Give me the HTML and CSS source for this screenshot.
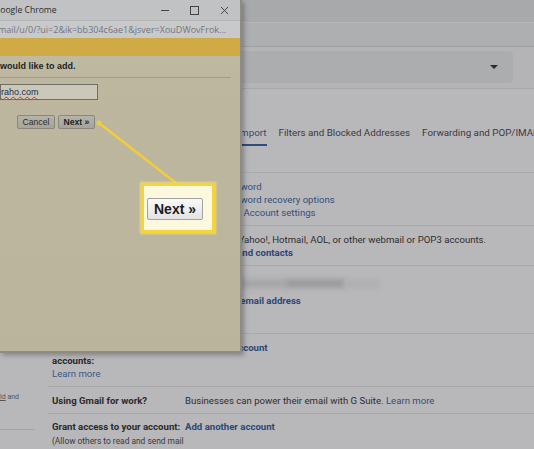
FILE: index.html
```html
<!DOCTYPE html>
<html>
<head>
<meta charset="utf-8">
<link rel="stylesheet" href="styles.css">
</head>
<body>
<div class="gmail">
  <div class="topbar"></div>
  <div class="subbar"></div>
  <div class="searchrow">
    <div class="search"><span class="caret"></span></div>
  </div>
  <div class="page">
    <aside class="side">
      <div class="side-text"><span class="side-link">ld</span> and</div>
      <div class="side-line"></div>
    </aside>
    <main class="main">
      <nav class="tabs">
        <span class="tab">General</span>
        <span class="tab">Labels</span>
        <span class="tab">Inbox</span>
        <span class="tab active">Accounts and Import</span>
        <span class="tab">Filters and Blocked Addresses</span>
        <span class="tab">Forwarding and POP/IMAP</span>
        <span class="tab">Add-ons</span>
      </nav>
      <section class="row r1">
        <div class="label">Change account settings:</div>
        <div class="content">
          <div class="link">Change password</div>
          <div class="link">Change password recovery options</div>
          <div class="link">Other Google Account settings</div>
        </div>
      </section>
      <section class="row r2">
        <div class="label">Import mail and contacts:</div>
        <div class="content">
          <div>Import from Yahoo!, Hotmail, AOL, or other webmail or POP3 accounts.</div>
          <div class="link strong">Import mail and contacts</div>
        </div>
      </section>
      <section class="row r3">
        <div class="label">Send mail as:</div>
        <div class="content">
          <div class="blur-line"><span class="blur a"></span><span class="blur b"></span><span class="blur c"></span></div>
          <div class="link strong">Add another email address</div>
        </div>
      </section>
      <section class="row r4">
        <div class="label"><b>Check mail from other accounts:</b><div class="link">Learn more</div></div>
        <div class="content">
          <div class="link strong">Add a mail account</div>
        </div>
      </section>
      <section class="row r5">
        <div class="label"><b>Using Gmail for work?</b></div>
        <div class="content">Businesses can power their email with G Suite. <span class="link">Learn more</span></div>
      </section>
      <section class="row r6">
        <div class="label"><b>Grant access to your account:</b><div class="note">(Allow others to read and send mail on your behalf)</div></div>
        <div class="content">
          <div class="link strong">Add another account</div>
        </div>
      </section>
    </main>
  </div>
</div>

<div class="popup">
  <div class="titlebar">
    <span class="title">Google Chrome</span>
    <div class="controls">
      <span class="ctl min"></span>
      <span class="ctl max"></span>
      <svg class="ctl close" viewBox="0 0 10 10" width="9" height="9"><path d="M1 1L9 9M9 1L1 9" stroke="#3a3a3a" stroke-width="1"/></svg>
    </div>
  </div>
  <div class="urlbar"><span class="url">mail/u/0/?ui=2&amp;ik=bb304c6ae1&amp;jsver=XouDWovFrok...</span></div>
  <div class="banner"></div>
  <div class="pbody">
    <div class="prompt">would like to add.</div>
    <div class="field"><span class="typed">raho.com</span></div>
    <div class="buttons">
      <span class="btn cancel">Cancel</span>
      <span class="btn next">Next »</span>
    </div>
  </div>
</div>

<svg class="pointer" width="534" height="449" viewBox="0 0 534 449">
  <line x1="99" y1="123" x2="176" y2="183" stroke="#f2cd3a" stroke-width="2.5" stroke-linecap="round"/>
  <circle cx="99" cy="123" r="2.5" fill="#f2cd3a"/>
</svg>

<div class="callout">
  <span class="big-btn">Next »</span>
</div>
</body>
</html>
```
FILE: styles.css
```css
* { box-sizing: border-box; }
html, body { margin: 0; padding: 0; }
body {
  width: 534px;
  height: 449px;
  overflow: hidden;
  position: relative;
  background: #b8b7b9;
  font-family: Roboto, "Liberation Sans", sans-serif;
  color: #2e2e30;
}

/* Gmail background (dimmed) */
.topbar { height: 22px; background: #a8a9ab; }
.subbar { height: 25px; background: #aeafb1; border-top: 1px solid #b6b6b8; border-bottom: 1px solid #9fa0a2; }
.searchrow { height: 42px; background: #b4b4b6; border-bottom: 1px solid #a7a7a9; padding: 4px 21px 0 170px; }
.search {
  height: 32px; background: #acadaf; border-radius: 4px;
  display: flex; align-items: center; justify-content: flex-end; padding-right: 15px;
}
.caret { width: 0; height: 0; border-left: 4px solid transparent; border-right: 4px solid transparent; border-top: 4px solid #2a2a2a; }

.page { display: grid; grid-template-columns: 48px 1fr; }
.side { padding-top: 304px; font-size: 7px; line-height: 8px; color: #555; }
.side-text { white-space: nowrap; }
.side-link { text-decoration: underline; }
.side-line { margin-top: 28px; width: 35px; border-top: 1px solid #a4a4a6; }

.main { font-size: 9.6px; line-height: 13px; min-width: 0; }
.tabs {
  display: flex; gap: 12px; padding: 38px 0 26px 5px;
  border-bottom: 1px solid #aaaaac; white-space: nowrap; overflow: hidden;
}
.tab { flex-shrink: 0; line-height: 12px; padding-bottom: 5px; border-bottom: 2px solid transparent; color: #3a3a3c; font-size: 9.8px; }
.tab.active { color: #2f4d7e; border-bottom-color: #2f4d7e; }

.row {
  display: grid; grid-template-columns: 133px 1fr;
  padding: 7px 0 6px 4px; border-bottom: 1px solid #aaaaac;
}
.label { padding-right: 3px; }
.label b { font-weight: 700; color: #2a2a2c; }
.note { width: 140px; font-size: 8.4px; color: #3a3a3c; }
.content { white-space: nowrap; }
.link { color: #34507e; }
.strong { font-weight: 700; color: #2c4878; }
.r1 { padding: 7px 0 6px 4px; }
.r2 { padding: 7px 0 6px 4px; }
.r3 { padding: 11px 0 26px 4px; }
.r3 .link { margin-top: 4px; }
.r4 { padding: 7px 0 6px 4px; }
.r5 { padding: 7px 0 6px 4px; }
.r6 { padding: 6px 0 0 4px; border-bottom: 0; line-height: 14px; }
.r4 .label .link { color: #3d5a8c; }

.blur-line { height: 13px; display: flex; align-items: center; gap: 0; }
.blur { display: inline-block; height: 9px; filter: blur(2.5px); }
.blur.a { width: 100px; background: #a6a6a8; }
.blur.b { width: 60px; background: #9c9c9e; }
.blur.c { width: 35px; background: #b0b0b2; }

/* Popup window */
.popup {
  position: absolute; left: 0; top: 0; width: 242px; height: 353px;
  background: linear-gradient(#c8c1a4, #bdb7a0 22%, #bab49d);
  border-right: 2px solid #8f8b7e; border-bottom: 2px solid #8f8b7e;
  box-shadow: 2px 2px 5px rgba(0,0,0,0.3);
  overflow: hidden;
  font-family: "Liberation Sans", Arial, sans-serif;
}
.titlebar {
  height: 20px; background: #c1c2c4; display: flex; align-items: center;
  font-family: "Open Sans", sans-serif; font-size: 8.6px; color: #2b2b2b;
}
.title { margin-left: -6px; }
.controls { margin-left: auto; display: flex; align-items: center; gap: 21px; padding-right: 11px; }
.ctl { display: block; }
.min { width: 8px; border-top: 1px solid #444; }
.max { width: 9px; height: 9px; border: 1px solid #444; }
.urlbar {
  height: 18px; background: #c8c9cb; border-top: 1px solid #b4b5b7;
  font-family: "Open Sans", sans-serif; font-size: 9px; line-height: 17px; color: #75767a;
  white-space: nowrap; overflow: hidden;
}
.url { margin-left: -2px; }
.banner { height: 18px; background: #cfaa45; }
.pbody { padding-top: 5px; }
.prompt {
  font-weight: 700; font-size: 9px; line-height: 11px; color: #1f1f1f;
  padding-bottom: 5px; border-bottom: 1px solid #a89e7b; margin-right: 9px;
}
.field {
  margin-top: 6px; width: 98px; height: 16px; background: #ccc8b7; border: 1px solid #6f6e69;
  font-size: 9px; line-height: 14px; color: #1f2c4d;
}
.typed { text-decoration: underline wavy #b5403a; text-decoration-thickness: 1px; }
.buttons { display: flex; gap: 3px; margin-top: 15px; padding-left: 17px; }
.btn {
  height: 14px; display: flex; align-items: center; justify-content: center;
  background: linear-gradient(#b6b3aa, #a6a399); border: 1px solid #8a877d; border-radius: 2px;
  font-size: 8.6px; color: #2c2c2c;
}
.cancel { width: 38px; }
.next { width: 37px; font-weight: 700; color: #1e1e1e; }

/* Annotation */
.pointer { position: absolute; left: 0; top: 0; pointer-events: none; }
.callout {
  position: absolute; left: 141px; top: 183px; width: 74px; height: 50px;
  border: 3px solid #f4d43c; background: #fdf9df;
  box-shadow: 0 0 2px 1px rgba(248, 226, 110, 0.8);
  display: flex; align-items: center; padding-left: 3px; padding-top: 2px;
}
.big-btn {
  width: 56px; height: 22px; display: flex; align-items: center; justify-content: center;
  border: 1px solid #a2a2a2; border-radius: 2px;
  background: linear-gradient(#fafafa, #e2e2e2);
  font-family: "Liberation Sans", Arial, sans-serif; font-weight: 700; font-size: 14px; color: #1c1c1c;
}
```
